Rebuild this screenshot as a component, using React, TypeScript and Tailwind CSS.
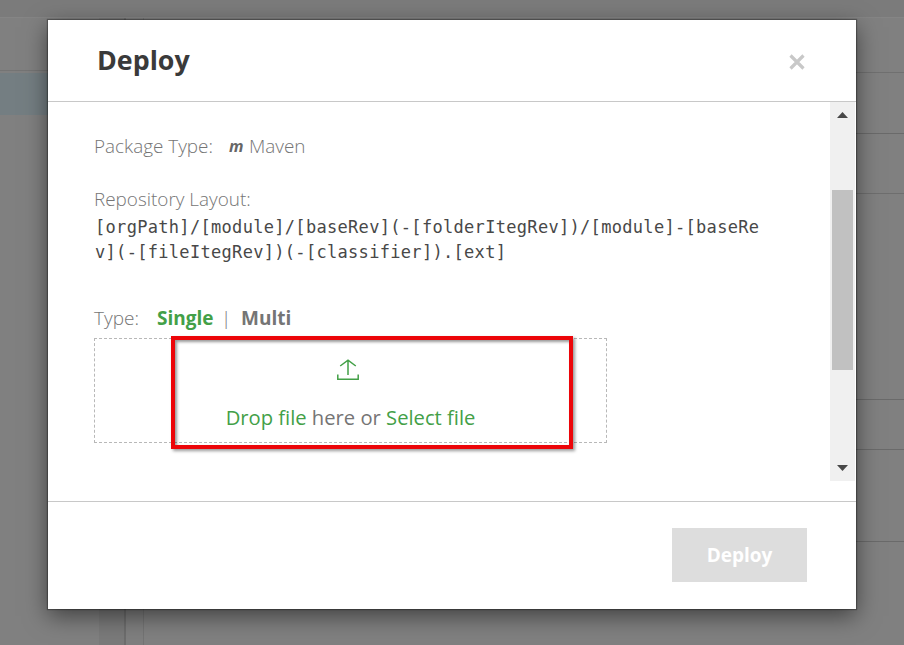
import React from "react";

function Backdrop() {
  return (
    <div className="flex h-full flex-col bg-[#808080]">
      <div className="h-[18px] shrink-0 border-b border-[#858585] bg-[#7b7b7b]" />
      <div className="flex min-h-0 flex-1">
        <div className="flex w-[99px] flex-col">
          <div className="h-[53px] border-b border-[#747474]" />
          <div className="mt-[2px] h-[42px] bg-[#747e82]" />
        </div>
        <div className="w-[25px] bg-[#7a7a7a]" />
        <div className="w-[20px] border-l-2 border-r border-l-[#6d6d6d] border-r-[#747474] bg-[#7f7f7f]" />
        <div className="flex flex-1 flex-col">
          <div className="h-[55px] border-b border-[#707070]" />
          <div className="h-[61px] border-b border-[#6a6a6a]" />
          <div className="h-[60px] border-b border-[#6e6e6e]" />
          <div className="h-[206px] border-b border-[#6a6a6a]" />
          <div className="h-[50px] border-b border-[#6a6a6a]" />
          <div className="h-[92px] border-b border-[#6a6a6a]" />
        </div>
      </div>
    </div>
  );
}

function UploadIcon() {
  return (
    <svg width="22" height="22" viewBox="0 0 22 22" fill="none" stroke="#43a047" strokeWidth="1.5">
      <path d="M11 16V1.5M3.2 7 11 1.2 18.8 7M.8 15.5v4.8h20.4v-4.8" />
    </svg>
  );
}

function Scrollbar() {
  return (
    <div className="flex h-[379px] w-[25px] flex-col items-center bg-[#f0f0f0]">
      <svg width="11" height="6" viewBox="0 0 11 6" className="mt-[10px] shrink-0" fill="#484848">
        <path d="M0 6 5.5 0 11 6Z" />
      </svg>
      <div className="mt-[72px] h-[180px] w-[21px] shrink-0 bg-[#c1c1c1]" />
      <svg width="11" height="6" viewBox="0 0 11 6" className="mt-[95px] shrink-0" fill="#484848">
        <path d="M0 0h11L5.5 6Z" />
      </svg>
    </div>
  );
}

export default function App() {
  return (
    <div className="relative h-[645px] w-[904px] overflow-hidden font-['Open_Sans',sans-serif]">
      <Backdrop />
      <div className="absolute left-[48px] top-[20px] flex h-[589px] w-[808px] flex-col bg-white shadow-[0_0_1px_1px_rgba(0,0,0,0.3),0_7px_22px_rgba(0,0,0,0.5)]">
        <header className="flex h-[82px] shrink-0 items-center justify-between border-b border-[#c8c8c8] pl-[49px] pr-[51px]">
          <h1 className="-mt-[2px] text-[26.8px] font-bold leading-[36px] text-[#3a3a3a]">Deploy</h1>
          <svg width="16" height="16" viewBox="0 0 16 16" stroke="#c8c8c8" strokeWidth="3.2" className="mt-[2px]">
            <path d="m1.5 1.5 13 13m0-13-13 13" />
          </svg>
        </header>
        <div className="flex h-[399px] shrink-0 justify-between pr-[1px]">
          <main className="box-content w-[670px] pl-[46px] pt-[29px] text-[19px] text-[#757575]">
            <div className="flex h-[30px] items-center text-[18.9px] font-light">
              <span className="w-[135px]">Package Type:</span>
              <span className="w-[20px] text-[16px] font-bold italic text-[#666]">m</span>
              <span>Maven</span>
            </div>
            <div className="mt-[23px] h-[30px] text-[18.9px] font-light leading-[30px]">Repository Layout:</div>
            <div className="mt-px h-[50px] whitespace-nowrap pl-px font-['DejaVu_Sans_Mono',monospace] text-[17px] leading-[25px] tracking-[0.31px] text-[#484848]">
              <div>[orgPath]/[module]/[baseRev](-[folderItegRev])/[module]-[baseRe</div>
              <div>v](-[fileItegRev])(-[classifier]).[ext]</div>
            </div>
            <div className="mt-[38px] flex h-[30px] items-center">
              <span className="w-[63px] font-light">Type:</span>
              <span className="w-[64px] font-bold text-[#43a047]">Single</span>
              <span className="w-[20px] font-light">|</span>
              <span className="font-bold">Multi</span>
            </div>
            <div className="relative mt-[5px] flex h-[105px] w-[513px] flex-col items-center border border-dashed border-[#b8b8b8] pt-[20px]">
              <div className="pr-[5px]">
                <UploadIcon />
              </div>
              <p className="mt-[21px] whitespace-nowrap text-[20.2px] leading-[30px]">
                <span className="text-[#43a047]">Drop file</span> here or <span className="text-[#43a047]">Select file</span>
              </p>
              <div className="absolute -top-[3px] left-[76px] h-[113px] w-[402px] border-4 border-[#ec0509] shadow-[2px_2px_3px_rgba(0,0,0,0.4),inset_2px_2px_3px_rgba(0,0,0,0.4)]" />
            </div>
          </main>
          <Scrollbar />
        </div>
        <footer className="flex flex-1 items-start justify-end border-t border-[#c8c8c8] pr-[49px] pt-[26px]">
          <button className="h-[54px] w-[135px] bg-[#ddd] text-[19px] font-bold text-white">Deploy</button>
        </footer>
      </div>
    </div>
  );
}
